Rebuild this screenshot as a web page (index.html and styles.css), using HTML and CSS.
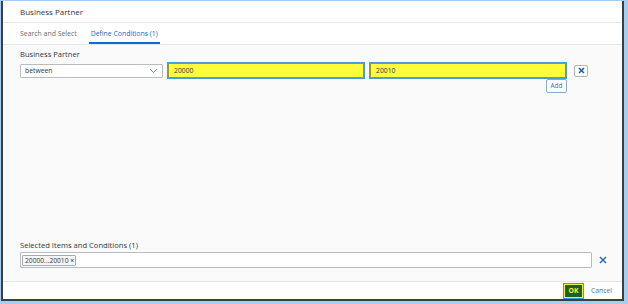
FILE: index.html
```html
<!DOCTYPE html>
<html>
<head>
<meta charset="utf-8">
<link rel="stylesheet" href="styles.css">
</head>
<body>
<div class="dialog">
  <div class="header">Business Partner</div>
  <div class="tabs">
    <div class="tab">Search and Select</div>
    <div class="tab active">Define Conditions (1)</div>
  </div>
  <div class="content">
    <div class="label">Business Partner</div>
    <div class="cond-row">
      <div class="select">
        <span>between</span>
        <svg class="chev" width="9" height="6" viewBox="0 0 9 6"><path d="M1 1.2 L4.5 4.6 L8 1.2" fill="none" stroke="#4b86c4" stroke-width="1"/></svg>
      </div>
      <div class="yinput">20000</div>
      <div class="yinput">20010</div>
      <div class="remove-col">
        <div class="xbtn"><svg width="7" height="7" viewBox="0 0 7 7"><path d="M1 1 L6 6 M6 1 L1 6" stroke="#1d5fa8" stroke-width="1.6"/></svg></div>
      </div>
    </div>
    <div class="add-row"><div class="addbtn">Add</div></div>
    <div class="spacer"></div>
    <div class="label">Selected Items and Conditions (1)</div>
    <div class="tok-row">
      <div class="tokenizer">
        <div class="token">20000...20010 <span class="tx">×</span></div>
      </div>
      <svg class="clear" width="8" height="8" viewBox="0 0 8 8"><path d="M1 1 L7 7 M7 1 L1 7" stroke="#2a6cb5" stroke-width="1.5"/></svg>
    </div>
  </div>
  <div class="footer">
    <div class="ok">OK</div>
    <div class="cancel">Cancel</div>
  </div>
</div>
</body>
</html>
```
FILE: styles.css
```css
html, body { margin: 0; padding: 0; }
body {
  background: #a8cdf0;
  padding: 1px 4px 3px 1px;
  height: 304px;
  box-sizing: border-box;
  font-family: "Open Sans", "Liberation Sans", sans-serif;
  color: #32363a;
}
.dialog {
  height: 300px;
  box-sizing: border-box;
  background: #fff;
  border-left: 2px solid #3c3f42;
  border-right: 2px solid #3c3f42;
  border-bottom: 2px solid #3c3f42;
  display: flex;
  flex-direction: column;
}
.header {
  height: 22px;
  box-sizing: border-box;
  border-bottom: 1px solid #e8e8e8;
  padding: 6px 0 0 17px;
  font-size: 8px;
  line-height: 10px;
  color: #32363a;
}
.tabs {
  height: 22px;
  box-sizing: border-box;
  border-bottom: 1px solid #e5e5e5;
  display: flex;
  padding-left: 17px;
}
.tab {
  font-size: 6.9px;
  line-height: 10px;
  padding-top: 6px;
  color: #6a6d70;
  margin-right: 14px;
  box-sizing: border-box;
}
.tab.active {
  color: #0a6ed1;
  border-bottom: 2px solid #0a6ed1;
  padding: 6px 2px 0 2px;
  margin-left: -2px;
}
.content {
  flex: 1;
  background: #fafafa;
  padding: 4px 0 0 17px;
  display: flex;
  flex-direction: column;
  border-bottom: 1px solid #e5e5e5;
}
.label {
  font-size: 7.6px;
  line-height: 10px;
  color: #32363a;
}
.cond-row {
  display: flex;
  align-items: center;
  margin-top: 3px;
  height: 17px;
}
.select {
  width: 143px;
  height: 14px;
  box-sizing: border-box;
  border: 1px solid #b8bcc0;
  border-radius: 1px;
  background: #fff;
  display: flex;
  align-items: center;
  justify-content: space-between;
  padding: 0 4px 0 4px;
  font-size: 6.8px;
  color: #32363a;
}
.chev { display: block; }
.yinput {
  width: 198px;
  height: 17px;
  box-sizing: border-box;
  border: 1px solid #4a9be0;
  background: #fffd3a;
  box-shadow: inset 0 0 0 1px #9a9a2a;
  margin-left: 4px;
  padding-left: 6px;
  display: flex;
  align-items: center;
  font-size: 6.8px;
  color: #32363a;
}
.remove-col { margin-left: 7px; }
.xbtn {
  width: 14px;
  height: 12px;
  box-sizing: border-box;
  border: 1px solid #b0b4b8;
  border-radius: 2px;
  background: #fff;
  display: flex;
  align-items: center;
  justify-content: center;
}
.xbtn svg { display: block; }
.add-row {
  display: flex;
  padding-left: 526px;
  margin-top: 0;
}
.addbtn {
  width: 21px;
  height: 14px;
  box-sizing: border-box;
  border: 1px solid #8aa9cc;
  border-radius: 2px;
  background: #fff;
  font-size: 6.4px;
  line-height: 12px;
  text-align: center;
  color: #2f6db5;
}
.spacer { flex: 1; }
.tok-row {
  display: flex;
  align-items: center;
  margin-top: 2px;
  margin-bottom: 13px;
}
.tokenizer {
  width: 572px;
  height: 16px;
  box-sizing: border-box;
  border: 1px solid #b8bcc0;
  border-radius: 1px;
  background: #fff;
  display: flex;
  align-items: center;
  padding-left: 1px;
}
.token {
  height: 11px;
  box-sizing: border-box;
  border: 1px solid #a8acb0;
  border-radius: 1px;
  background: #f5f5f5;
  font-size: 6.7px;
  line-height: 9px;
  padding: 0 1px 0 2px;
  color: #32363a;
  white-space: nowrap;
}
.tx { color: #2a6cb5; font-weight: bold; }
.clear { margin-left: 7px; display: block; }
.footer {
  height: 17px;
  display: flex;
  align-items: center;
  justify-content: flex-end;
  padding-right: 10px;
}
.ok {
  width: 21px;
  height: 16px;
  box-sizing: border-box;
  border: 1px solid #3f95e0;
  box-shadow: inset 0 0 0 1px #f2f23a;
  background: #1d6320;
  color: #f5f53a;
  font-size: 6.8px;
  font-weight: bold;
  display: flex;
  align-items: center;
  justify-content: center;
}
.cancel {
  margin-left: 7px;
  font-size: 6.8px;
  color: #3b78c0;
}
```
